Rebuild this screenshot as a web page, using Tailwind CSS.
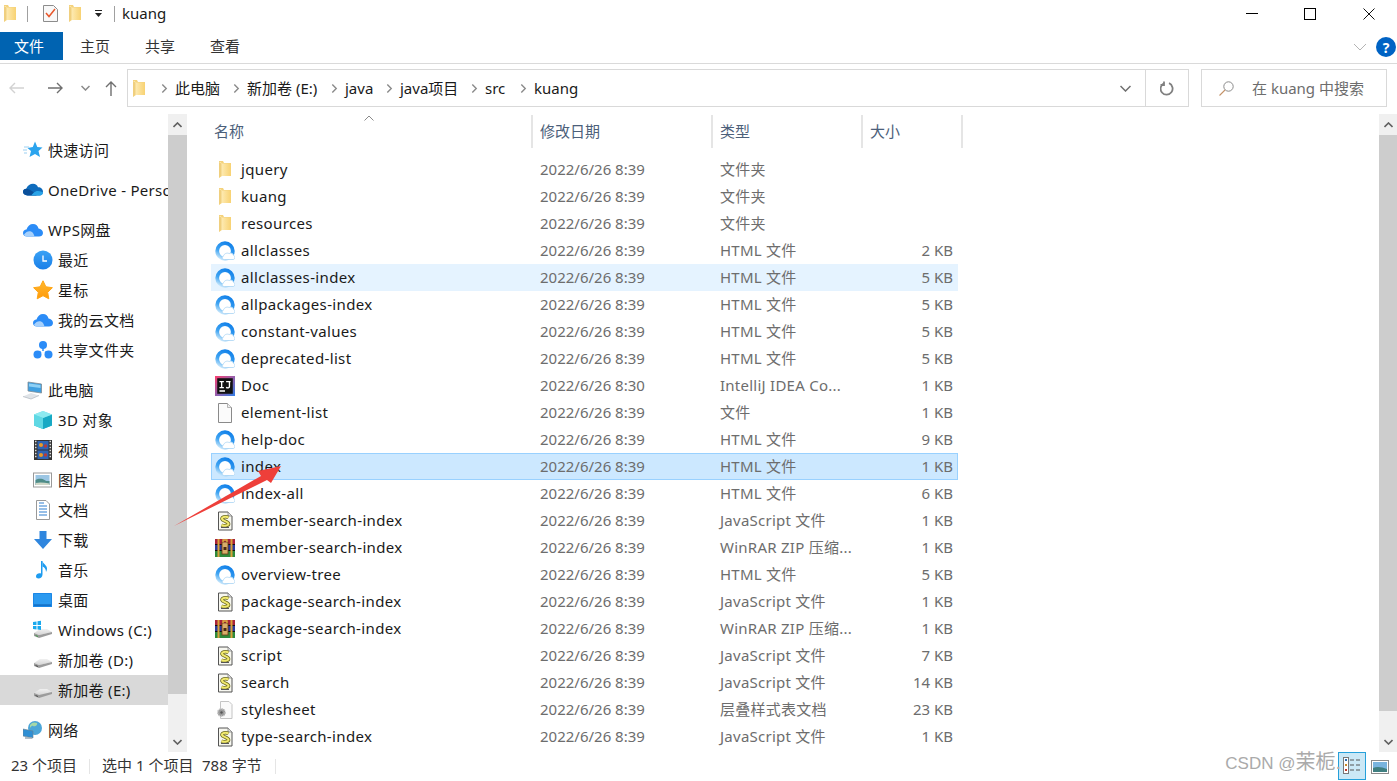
<!DOCTYPE html>
<html lang="en">
<head>
  <meta charset="UTF-8">
  <title>kuang</title>
  <script src="https://cdn.jsdelivr.net/npm/@tailwindcss/browser@4"></script>
</head>
<body class="bg-white">
  <svg class="absolute w-0 h-0" width="0" height="0">
    <defs>
      <linearGradient id="ring" x1="0.7" y1="0" x2="0.2" y2="1"><stop offset="0" stop-color="#1583ea"/><stop offset="0.6" stop-color="#3fa4f2"/><stop offset="1" stop-color="#c4e5fb"/></linearGradient>
      <linearGradient id="sky" x1="0" y1="0" x2="0" y2="1"><stop offset="0" stop-color="#3aa2f5"/><stop offset="1" stop-color="#1a7fe8"/></linearGradient>
      <linearGradient id="gold" x1="0" y1="0" x2="0" y2="1"><stop offset="0" stop-color="#ffb92e"/><stop offset="1" stop-color="#ff9a0a"/></linearGradient>
      <linearGradient id="ij" x1="0" y1="0" x2="1" y2="1"><stop offset="0" stop-color="#fc3e6f"/><stop offset="1" stop-color="#2f7fe8"/></linearGradient>
      <linearGradient id="cube" x1="0" y1="0" x2="0" y2="1"><stop offset="0" stop-color="#7de3ec"/><stop offset="1" stop-color="#1fb8cc"/></linearGradient>
      <linearGradient id="drive" x1="0" y1="0" x2="0" y2="1"><stop offset="0" stop-color="#f0f0f0"/><stop offset="1" stop-color="#d5d5d5"/></linearGradient>
      <linearGradient id="fold" x1="0" y1="0" x2="1" y2="0"><stop offset="0" stop-color="#fff1c4"/><stop offset="1" stop-color="#f8d272"/></linearGradient>
    </defs>
    <symbol id="folder" viewBox="0 0 12 17">
      <path d="M0 0h4l1 2h7v13H0z" fill="#f4d27c"/>
      <path d="M0 1h1.500L3 2.500h9V15H3l-3 2z" fill="url(#fold)"/>
      <path d="M0 1 2.500 2.500V15L0 17z" fill="#f0cf7e"/>
    </symbol>
    <symbol id="html" viewBox="0 0 20 20">
      <circle cx="10" cy="10" r="7.800" fill="#fff" stroke="url(#ring)" stroke-width="3.800"/>
      <path d="M9.500 18.500c-2.500 0-3-2.200-1.200-3.200.6-2.500 3.700-4 5.800-2.700 1.200-1.100 4.200-.5 4.400 1.700 1.800.4 1.900 4.200-.2 4.200z" fill="#fff" stroke="#a9d4f4" stroke-width=".8"/>
    </symbol>
    <symbol id="js" viewBox="0 0 20 20">
      <path d="M3.500 1h9.500l4 4v14h-13.500z" fill="#f7f7f0" stroke="#555"/>
      <path d="M13 1v4h4" fill="#ddd" stroke="#777" stroke-width=".7"/>
      <path d="M13.500 6.500c-3-1.500-7-.5-6.500 1.500.5 2.200 6 2 6.500 4.500.4 2-4 3-7 1.500" fill="none" stroke="#6d6a1e" stroke-width="3.600"/>
      <path d="M13.500 6.500c-3-1.500-7-.5-6.500 1.500.5 2.200 6 2 6.500 4.500.4 2-4 3-7 1.500" fill="none" stroke="#f2ea70" stroke-width="2"/>
      <path d="M6 16.500h8" stroke="#555" stroke-width="1"/>
    </symbol>
    <symbol id="rar" viewBox="0 0 20 20">
      <rect x="0" y="1" width="20" height="6" fill="#a8243c"/>
      <rect x="0" y="7" width="20" height="6" fill="#2d3b9a"/>
      <rect x="0" y="13" width="20" height="6" fill="#2f8a3c"/>
      <path d="M0 6.500h20M0 12.500h20" stroke="#111" stroke-width="1"/>
      <rect x="2.500" y="1" width="2" height="18" fill="#d9a13b"/>
      <rect x="15.500" y="1" width="2" height="18" fill="#d9a13b"/>
      <rect x="7" y="4" width="6" height="12" fill="#d8ad6a" stroke="#6b3a13" stroke-width=".8"/>
      <path d="M8 4V2h4v2" fill="none" stroke="#e0b53f" stroke-width="1.400"/>
      <rect x="8.500" y="9" width="3" height="3" fill="#4a2a10"/>
    </symbol>
    <symbol id="idea" viewBox="0 0 18 18">
      <rect width="18" height="18" fill="url(#ij)"/>
      <rect x="2" y="2" width="14" height="14" fill="#111"/>
      <path d="M4 5h4M6 5v5.500M4 10.500h4M10 5h4M13 5v4.500c0 1.200-1.500 1.500-3 .7M4 13.500h5" fill="none" stroke="#fff" stroke-width="1.200"/>
    </symbol>
    <symbol id="blank" viewBox="0 0 20 20">
      <path d="M3.500 .5h9l4 4v15h-13z" fill="#fbfbfb" stroke="#8a8a8a"/>
      <path d="M12.500 .5v4h4" fill="#eee" stroke="#a5a5a5" stroke-width=".8"/>
    </symbol>
    <symbol id="css" viewBox="0 0 20 20">
      <path d="M5.500 1.500h8.500l3 3v14h-11.500z" fill="#fafafa" stroke="#c4c4c4"/>
      <circle cx="6.500" cy="12.500" r="3.800" fill="#9a9a9a" stroke="#c8c8c8" stroke-width="1.400" stroke-dasharray="1.500 1"/>
      <circle cx="6.500" cy="12.500" r="1.200" fill="#555"/>
    </symbol>
    <symbol id="quick" viewBox="0 0 20 20">
      <path d="M12 1.500 14.300 7 19.500 7.500 15.500 11 17 17 12 14 6.500 17 8 11 4.500 8 9.800 7z" fill="#2ba4ee"/>
      <path d="M1 7h5M0 10h4M1 13h3" stroke="#9bd0f2" stroke-width="1"/>
    </symbol>
    <symbol id="onedrive" viewBox="0 0 22 16">
      <path d="M5 14c-3.500 0-5-2-5-4 0-2.500 2-3.500 3.500-3.500C5 2.500 8 1 11 1c2.800 0 4.800 1.500 5.500 4 3-.2 5.500 2 5.500 4.800 0 2.500-1.800 4.200-4 4.200z" fill="#0f6cbd"/>
      <path d="M5 14c-3 0-5-1.800-5-4 0-2 2-3.500 4-3.300 5 1.300 9 4 11 7.300z" fill="#0a4f9a"/>
      <path d="M9 14c2-2 3.500-5 7.500-5 3 0 5.500 1.500 5.500 2 0 1.700-1.500 3-3.500 3z" fill="#2aa4e8"/>
    </symbol>
    <symbol id="wps" viewBox="0 0 20 15">
      <path d="M4 14C1.500 14 0 12.500 0 10.500S1.500 7 3.500 7C4.500 3.500 7 1.500 10 1.500c3 0 5 2 5.500 4.500 2.500.3 4.500 2 4.500 4.500S18 14 16 14z" fill="#2b8cf7"/>
      <path d="M1 12c2-3 5-4 7-3 2 .8 3 3 3.500 5H4C2.500 14 1.500 13.200 1 12z" fill="#a6d0fb"/>
    </symbol>
    <symbol id="clock" viewBox="0 0 20 20">
      <circle cx="10" cy="10" r="9.500" fill="url(#sky)"/>
      <path d="M10 5.500V11h4" fill="none" stroke="#fff" stroke-width="1.300"/>
    </symbol>
    <symbol id="star" viewBox="0 0 20 20">
      <path d="M10 .8l2.900 6 6.500.9-4.700 4.600 1.100 6.500-5.800-3.100-5.800 3.100 1.100-6.500L.6 7.700l6.500-.9z" fill="url(#gold)" stroke="#ffa514" stroke-linejoin="round"/>
    </symbol>
    <symbol id="share" viewBox="0 0 20 20">
      <circle cx="10" cy="5" r="4" fill="#2b8cf7"/>
      <circle cx="4.500" cy="14.500" r="4" fill="#2b8cf7"/>
      <circle cx="15.500" cy="14.500" r="4" fill="#2b8cf7"/>
      <path d="M10 8v3M8 12 6 13M12 12l2 1" stroke="#2b8cf7" stroke-width="1.500"/>
    </symbol>
    <symbol id="pc" viewBox="0 0 20 20">
      <path d="M5 2 18.500 4v9L5 11z" fill="#3f9fe0" stroke="#7d8b96" stroke-width=".8"/>
      <path d="M6 3.500 17.500 5v3L6 6.500z" fill="#8ed0f5"/>
      <path d="M0 16.500 8 13l8 2.500-8 3.500z" fill="#e0e4e8"/>
      <path d="M0 16.500l8 2.500 8-3.500" fill="none" stroke="#b5bcc4" stroke-width=".8"/>
    </symbol>
    <symbol id="cube3d" viewBox="0 0 20 20">
      <path d="M10 1l9 3.500v11L10 19l-9-3.500v-11z" fill="url(#cube)"/>
      <path d="M10 8l9-3.500v11L10 19z" fill="#18a9c4"/>
      <path d="M10 8 1 4.500 10 1l9 3.500z" fill="#8deaf0"/>
      <path d="M1 4.500 10 8v11l-9-3.500z" fill="#5fd8e4"/>
    </symbol>
    <symbol id="film" viewBox="0 0 20 20">
      <rect x="1" y="0" width="18" height="20" fill="#333"/>
      <rect x="4.500" y="1" width="11" height="8.500" fill="#2e64b5"/>
      <rect x="4.500" y="10.500" width="11" height="8.500" fill="#2e64b5"/>
      <circle cx="8" cy="5" r="2" fill="#e89a28"/><circle cx="12.500" cy="6" r="1.700" fill="#b83a3a"/>
      <circle cx="8" cy="15" r="2" fill="#e89a28"/><circle cx="12.500" cy="15" r="1.700" fill="#b83a3a"/>
      <path d="M2 1.500h1.500M2 4.500h1.500M2 7.500h1.500M2 10.500h1.500M2 13.500h1.500M2 16.500h1.500M16.500 1.500H18M16.500 4.500H18M16.500 7.500H18M16.500 10.500H18M16.500 13.500H18M16.500 16.500H18" stroke="#ddd" stroke-width="1.300"/>
    </symbol>
    <symbol id="pic" viewBox="0 0 20 16">
      <rect x=".5" y="1" width="18" height="14" fill="#fff" stroke="#9a9a9a"/>
      <rect x="2.500" y="3" width="14" height="10" fill="#9cc6e4"/>
      <path d="M2.500 8c3-2 7-1.500 9 0s3.500 1 5 1v4h-14z" fill="#4e8c88"/>
      <path d="M2.500 11c4-1 9-.5 14 .5V13h-14z" fill="#cfd8c8"/>
    </symbol>
    <symbol id="doc" viewBox="0 0 20 20">
      <path d="M3.500 .5h9.500l3.500 3.500v15.500h-13z" fill="#fff" stroke="#999"/>
      <path d="M6 3h5M6 6h8M6 9h8M6 12h8M6 15h8" stroke="#2f7fd0" stroke-width="1.100"/>
    </symbol>
    <symbol id="down" viewBox="0 0 20 20">
      <path d="M6.500 1h7v8H19l-9 10L1 9h5.500z" fill="#2f86de"/>
    </symbol>
    <symbol id="music" viewBox="0 0 20 20">
      <path d="M9.500 1v13.500c0 2.500-2 4-4 4-1.500 0-2.500-1-2.500-2.300 0-1.800 1.800-3 3.500-3 .5 0 1 .1 1.500.3V1z" fill="#1e9cf0"/>
      <path d="M9.500 1c.5 3 4.500 4 4.500 7.500 0 1.500-.5 2.500-1 3.500 0-3-1.500-4.500-3.500-5.500z" fill="#1e9cf0"/>
    </symbol>
    <symbol id="desktop" viewBox="0 0 20 16">
      <rect x="0" y="1" width="19" height="14" rx=".5" fill="#1b87e6"/>
      <rect x="1" y="2" width="17" height="11" fill="#2b9af0"/>
      <path d="M1 13h17" stroke="#0c5fb0" stroke-width="1"/>
    </symbol>
    <symbol id="drv" viewBox="0 0 20 20">
      <path d="M1 13 7 9h7l5 3-13 3z" fill="url(#drive)"/>
      <path d="M1 13l5 2 13-3v2L6 18l-5-2z" fill="#9c9c9c"/>
      <path d="M2.500 15.500 5 16.500" stroke="#4a4a4a" stroke-width="1"/>
    </symbol>
    <symbol id="win" viewBox="0 0 20 20">
      <path d="M1 13 7 9h7l5 3-13 3z" fill="url(#drive)"/>
      <path d="M1 13l5 2 13-3v2L6 18l-5-2z" fill="#9c9c9c"/>
      <path d="M2.500 15.500 5 16.500" stroke="#3f9a4a" stroke-width="1"/>
      <path d="M0 2l3.500-.5V5H0zM4.500 1.300 8 .8V5H4.500zM0 6h3.500v3.500L0 9zM4.500 6H8v4l-3.500-.5z" fill="#19a9ee"/>
    </symbol>
    <symbol id="net" viewBox="0 0 20 20">
      <circle cx="12" cy="8" r="7" fill="#4ca6d8"/>
      <path d="M7 5c2-3 5-3 7-2 1 2-2 4-4 3s-2 3-3 1z" fill="#a6d8a8"/>
      <path d="M0 9l10 2v7l-10-2z" fill="#2f8fd4" stroke="#6a7f90" stroke-width=".6"/>
      <path d="M2 18h7" stroke="#98a8b4" stroke-width="1.500"/>
    </symbol>
    <symbol id="chev" viewBox="0 0 8 12">
      <path d="M1.500 1.500 6 6l-4.500 4.500" fill="none" stroke="#8a8a8a" stroke-width="1.600"/>
    </symbol>
  </svg>

  <div class="relative w-[1397px] h-[781px] overflow-hidden flex flex-col bg-white text-[15px] text-[#1a1a1a] font-['Noto_Sans','Noto_Sans_CJK_SC',sans-serif]">

    <!-- title bar -->
    <div class="h-[32px] pb-[5px] flex items-center shrink-0">
      <svg class="ml-[4px] w-[12px] h-[17px]"><use href="#folder"/></svg>
      <div class="ml-[11px] w-px h-[16px] bg-[#a0a0a0]"></div>
      <svg class="ml-[15px] w-[15px] h-[17px]" viewBox="0 0 15 17">
        <path d="M.5.5h10l4 4v12H.5z" fill="#f8f8f8" stroke="#8c8c8c"/>
        <path d="M3 8l3 3.500L12 4" fill="none" stroke="#e8562a" stroke-width="1.500"/>
      </svg>
      <svg class="ml-[11px] w-[12px] h-[17px]"><use href="#folder"/></svg>
      <svg class="ml-[13px] w-[9px] h-[8px]" viewBox="0 0 9 8"><path d="M1 0h7v1H1zM1 3h7L4.500 7z" fill="#222"/></svg>
      <div class="ml-[11px] w-px h-[16px] bg-[#a0a0a0]"></div>
      <span class="ml-[7px]">kuang</span>
      <div class="ml-auto flex items-center">
        <div class="w-[12px] h-px bg-black mr-[46px]"></div>
        <div class="w-[12px] h-[12px] border border-black mr-[47px]"></div>
        <svg class="w-[12px] h-[12px] mr-[22px]" viewBox="0 0 12 12"><path d="M.5.500l11 11M11.500.500l-11 11" stroke="#111" fill="none"/></svg>
      </div>
    </div>

    <!-- ribbon tabs -->
    <div class="h-[32px] flex items-start border-b border-[#dadada] shrink-0">
      <div class="w-[63px] h-[28px] pr-[5px] bg-[#0063b1] text-white flex items-center justify-center">文件</div>
      <div class="ml-[17px] h-[28px] flex items-center text-[#333]">主页</div>
      <div class="ml-[35px] h-[28px] flex items-center text-[#333]">共享</div>
      <div class="ml-[35px] h-[28px] flex items-center text-[#333]">查看</div>
      <svg class="ml-auto mt-[11px] w-[14px] h-[8px]" viewBox="0 0 14 8"><path d="M1 1l6 6 6-6" fill="none" stroke="#b4b4b4"/></svg>
      <div class="ml-[9px] mr-[1px] mt-[5px] w-[20px] h-[20px] rounded-full bg-[#0063c4] text-white font-bold text-[14px] flex items-center justify-center">?</div>
    </div>

    <!-- nav and address -->
    <div class="h-[50px] flex items-start pt-[5px] shrink-0">
      <div class="h-[38px] w-[127px] flex items-center">
        <svg class="ml-[9px] w-[15px] h-[12px]" viewBox="0 0 15 12"><path d="M15 6H1M6 1 1 6l5 5" fill="none" stroke="#d2d2d2" stroke-width="1.400"/></svg>
        <svg class="ml-[24px] w-[15px] h-[12px]" viewBox="0 0 15 12"><path d="M0 6h14M9 1l5 5-5 5" fill="none" stroke="#6f6f6f" stroke-width="1.400"/></svg>
        <svg class="ml-[18px] w-[9px] h-[6px]" viewBox="0 0 9 6"><path d="M.5 1 4.500 5l4-4" fill="none" stroke="#8a8a8a" stroke-width="1.500"/></svg>
        <svg class="ml-[15px] w-[12px] h-[15px]" viewBox="0 0 12 15"><path d="M6 15V1M1 6l5-5 5 5" fill="none" stroke="#6f6f6f" stroke-width="1.400"/></svg>
      </div>
      <div class="w-[1062px] h-[38px] border border-[#d9d9d9] flex items-center">
        <svg class="ml-[5px] w-[12px] h-[17px]"><use href="#folder"/></svg>
        <div id="crumbs" class="ml-[16px] flex items-center"></div>
        <svg class="ml-auto w-[11px] h-[7px]" viewBox="0 0 11 7"><path d="M.5 1 5.500 6l5-5" fill="none" stroke="#6f6f6f" stroke-width="1.500"/></svg>
        <div class="ml-[14px] w-px h-full bg-[#d9d9d9]"></div>
        <svg class="mx-[14px] w-[14px] h-[15px]" viewBox="0 0 14 15"><path d="M9 2.200A6 6 0 1 1 4 2.300M4 .5v3.500H.5" fill="none" stroke="#808080" stroke-width="1.800"/></svg>
      </div>
      <div class="ml-[12px] w-[186px] h-[38px] border border-[#d9d9d9] flex items-center text-[#6d6d6d]">
        <svg class="ml-[17px] w-[15px] h-[15px]" viewBox="0 0 15 15"><circle cx="9.500" cy="5.500" r="4.700" fill="none" stroke="#8a8a8a"/><path d="M6 9 .5 14.500" stroke="#c49268" stroke-width="1.100"/></svg>
        <span class="ml-[18px]">在 kuang 中搜索</span>
      </div>
    </div>

    <!-- body -->
    <div class="h-[638px] flex shrink-0">
      <nav id="tree" class="w-[168px] shrink-0 pt-[21px] overflow-hidden"></nav>
      <div class="w-[19px] shrink-0 flex flex-col bg-[#f0f0f0]">
        <div class="h-[21px] flex items-center justify-center"><svg class="w-[9px] h-[6px]" viewBox="0 0 9 6"><path d="M.5 5l4-4 4 4" fill="none" stroke="#606060" stroke-width="1.600"/></svg></div>
        <div class="h-[559px] bg-[#cdcdcd]"></div>
        <div class="mt-auto h-[21px] flex items-center justify-center"><svg class="w-[9px] h-[6px]" viewBox="0 0 9 6"><path d="M.5 1l4 4 4-4" fill="none" stroke="#606060" stroke-width="1.600"/></svg></div>
      </div>
      <main class="w-[1192px] shrink-0 pl-[24px] relative">
        <svg class="absolute left-[177px] top-px w-[10px] h-[6px]" viewBox="0 0 10 6"><path d="M.5 5.500 5 1l4.500 4.500" fill="none" stroke="#8a8a8a"/></svg>
        <div class="h-[33px] mt-px flex text-[#4c607a]">
          <div class="w-[322px] pl-[3px] flex items-center border-r-2 border-[#e5e5e5]">名称</div>
          <div class="w-[180px] pl-[7px] flex items-center border-r-2 border-[#e5e5e5]">修改日期</div>
          <div class="w-[150px] pl-[7px] flex items-center border-r-2 border-[#e5e5e5]">类型</div>
          <div class="w-[100px] pl-[7px] flex items-center border-r-2 border-[#e5e5e5]">大小</div>
        </div>
        <div id="rows" class="mt-[8px] w-[747px]"></div>
      </main>
      <div class="w-[18px] shrink-0 flex flex-col bg-[#f0f0f0]">
        <div class="h-[21px] flex items-center justify-center"><svg class="w-[9px] h-[6px]" viewBox="0 0 9 6"><path d="M.5 5l4-4 4 4" fill="none" stroke="#606060" stroke-width="1.600"/></svg></div>
        <div class="h-[576px] bg-[#cdcdcd]"></div>
        <div class="mt-auto h-[21px] flex items-center justify-center"><svg class="w-[9px] h-[6px]" viewBox="0 0 9 6"><path d="M.5 1l4 4 4-4" fill="none" stroke="#606060" stroke-width="1.600"/></svg></div>
      </div>
    </div>

    <!-- status bar -->
    <div class="flex-1 flex items-center text-[#333]">
      <span class="ml-[11px] w-[78px] mb-[3px] whitespace-nowrap">23 个项目</span>
      <div class="w-px h-[15px] bg-[#e5e5e5]"></div>
      <span class="ml-[12px] w-[100px] mb-[3px] whitespace-nowrap">选中 1 个项目</span>
      <span class="w-[73px] mb-[3px] whitespace-nowrap">788 字节</span>
      <div class="w-px h-[15px] bg-[#e5e5e5]"></div>
      <div class="ml-auto w-[28px] h-[28px] mt-[-2px] border border-[#26a0da] bg-[#cbe8f6] flex items-center justify-center">
        <svg class="w-[18px] h-[17px]" viewBox="0 0 18 17">
          <rect x=".5" y=".5" width="5" height="16" fill="#fff" stroke="#777"/>
          <rect x="2" y="2" width="2" height="2" fill="#2b6cb0"/><rect x="2" y="7" width="2" height="2" fill="#c98a2b"/><rect x="2" y="12" width="2" height="2" fill="#c0392b"/>
          <path d="M7 3h4M13 3h4M7 8h4M13 8h4M7 13h4M13 13h4" stroke="#555"/>
        </svg>
      </div>
      <svg class="ml-[5px] mr-[8px] w-[18px] h-[14px]" viewBox="0 0 18 14">
        <rect x=".5" y=".5" width="17" height="13" fill="#fff" stroke="#8a8a8a"/>
        <rect x="2" y="2" width="14" height="10" fill="#79b4de"/>
        <path d="M2 8c4-2 9-1 14 1v3H2z" fill="#3f7f80"/>
      </svg>
    </div>

    <!-- csdn watermark, sits over the status bar -->
    <span class="absolute right-[56px] bottom-[4px] flex items-baseline text-[#aaaaaa] font-['Liberation_Sans','Noto_Sans_CJK_SC',sans-serif]">
      <span class="text-[17px] whitespace-pre">CSDN @</span><span class="text-[20px]">茉栀.</span>
    </span>

    <!-- red annotation arrow -->
    <svg class="absolute left-0 top-0 w-[1397px] h-[781px] pointer-events-none" viewBox="0 0 1397 781">
      <path d="M174 526 261 476 258 471 281 466 271 483 267 480z" fill="#ee3f3a"/>
    </svg>
  </div>

  <script>
    const crumbs = [["此电脑", "w-[72px]"], ["新加卷 (E:)", "w-[98px]"], ["java", "w-[55px]"], ["java项目", "w-[85px]"], ["src", "w-[49px]"], ["kuang", "w-[60px]"]];
    document.getElementById("crumbs").innerHTML = crumbs.map(([text, width]) => `
      <div class="${width} flex items-center shrink-0">
        <svg class="w-[7px] h-[11px] mr-[7px] shrink-0"><use href="#chev"/></svg>
        <span class="whitespace-nowrap">${text}</span>
      </div>`).join("");

    // icon, label, indent level, gap above, selected
    const tree = [
      ["quick", "快速访问", 1, 0],
      ["onedrive", "OneDrive - Personal", 1, 10],
      ["wps", "WPS网盘", 1, 10],
      ["clock", "最近", 2, 0],
      ["star", "星标", 2, 0],
      ["wps", "我的云文档", 2, 0],
      ["share", "共享文件夹", 2, 0],
      ["pc", "此电脑", 1, 10],
      ["cube3d", "3D 对象", 2, 0],
      ["film", "视频", 2, 0],
      ["pic", "图片", 2, 0],
      ["doc", "文档", 2, 0],
      ["down", "下载", 2, 0],
      ["music", "音乐", 2, 0],
      ["desktop", "桌面", 2, 0],
      ["win", "Windows (C:)", 2, 0],
      ["drv", "新加卷 (D:)", 2, 0],
      ["drv", "新加卷 (E:)", 2, 0, true],
      ["net", "网络", 1, 10]
    ];
    document.getElementById("tree").innerHTML = tree.map(([icon, label, level, gap, active]) => `
      <div class="h-[30px] flex items-center whitespace-nowrap overflow-hidden ${gap ? "mt-[10px]" : ""} ${active ? "bg-[#d9d9d9]" : ""} ${level == 1 ? "pl-[23px]" : "pl-[33px]"}">
        <svg class="w-[20px] h-[20px] shrink-0 mr-[5px]"><use href="#${icon}"/></svg>
        <span class="tracking-[0.3px]">${label}</span>
      </div>`).join("");

    const rows = [
      ["folder", "jquery", "2022/6/26 8:39", "文件夹", ""],
      ["folder", "kuang", "2022/6/26 8:39", "文件夹", ""],
      ["folder", "resources", "2022/6/26 8:39", "文件夹", ""],
      ["html", "allclasses", "2022/6/26 8:39", "HTML 文件", "2 KB"],
      ["html", "allclasses-index", "2022/6/26 8:39", "HTML 文件", "5 KB", "hover"],
      ["html", "allpackages-index", "2022/6/26 8:39", "HTML 文件", "5 KB"],
      ["html", "constant-values", "2022/6/26 8:39", "HTML 文件", "5 KB"],
      ["html", "deprecated-list", "2022/6/26 8:39", "HTML 文件", "5 KB"],
      ["idea", "Doc", "2022/6/26 8:30", "IntelliJ IDEA Co...", "1 KB"],
      ["blank", "element-list", "2022/6/26 8:39", "文件", "1 KB"],
      ["html", "help-doc", "2022/6/26 8:39", "HTML 文件", "9 KB"],
      ["html", "index", "2022/6/26 8:39", "HTML 文件", "1 KB", "selected"],
      ["html", "index-all", "2022/6/26 8:39", "HTML 文件", "6 KB"],
      ["js", "member-search-index", "2022/6/26 8:39", "JavaScript 文件", "1 KB"],
      ["rar", "member-search-index", "2022/6/26 8:39", "WinRAR ZIP 压缩...", "1 KB"],
      ["html", "overview-tree", "2022/6/26 8:39", "HTML 文件", "5 KB"],
      ["js", "package-search-index", "2022/6/26 8:39", "JavaScript 文件", "1 KB"],
      ["rar", "package-search-index", "2022/6/26 8:39", "WinRAR ZIP 压缩...", "1 KB"],
      ["js", "script", "2022/6/26 8:39", "JavaScript 文件", "7 KB"],
      ["js", "search", "2022/6/26 8:39", "JavaScript 文件", "14 KB"],
      ["css", "stylesheet", "2022/6/26 8:39", "层叠样式表文档", "23 KB"],
      ["js", "type-search-index", "2022/6/26 8:39", "JavaScript 文件", "1 KB"]
    ];
    const rowStyle = {
      hover: "bg-[#e5f3ff] border-[#e5f3ff]",
      selected: "bg-[#cce8ff] border-[#99d1ff]"
    };
    document.getElementById("rows").innerHTML = rows.map(([icon, name, date, type, size, state]) => `
      <div class="h-[27px] flex items-center border whitespace-nowrap ${rowStyle[state] || "border-transparent"}">
        <div class="w-[321px] shrink-0 flex items-center">
          <svg class="${icon == "folder" ? "ml-[7px] mr-[4px] w-[12px] h-[17px]" : "ml-[3px] w-[20px] h-[20px]"} shrink-0"><use href="#${icon}"/></svg>
          <span class="ml-[6px] tracking-[0.35px]">${name}</span>
        </div>
        <span class="w-[180px] shrink-0 pl-[7px] text-[#6d6d6d]">${date}</span>
        <span class="w-[150px] shrink-0 pl-[7px] tracking-[0.25px] text-[#6d6d6d]">${type}</span>
        <span class="w-[90px] shrink-0 text-right text-[#6d6d6d]">${size}</span>
      </div>`).join("");
  </script>
</body>
</html>
